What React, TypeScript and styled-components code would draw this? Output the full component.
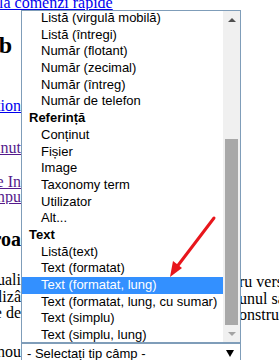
import styled, { createGlobalStyle } from 'styled-components';

const GlobalStyle = createGlobalStyle`
  html, body {
    margin: 0;
    padding: 0;
    background: #fff;
  }
  body {
    font-family: "Liberation Serif", "Times New Roman", serif;
    font-size: 16px;
    color: #000;
  }
`;

const Page = styled.div`
  position: relative;
  width: 279px;
  height: 360px;
  overflow: hidden;
  display: flex;
  flex-direction: column;
`;

const Line = styled.div<{ $top: number; $lh?: number; $size?: number; $bold?: boolean }>`
  display: flex;
  flex: none;
  margin-top: ${(p) => p.$top}px;
  line-height: ${(p) => p.$lh ?? 18}px;
  font-size: ${(p) => p.$size ?? 16}px;
  font-weight: ${(p) => (p.$bold ? 700 : 400)};
  white-space: nowrap;
`;

const Block = styled.div<{ $top: number; $lh: number }>`
  display: flex;
  flex-direction: column;
  flex: none;
  margin-top: ${(p) => p.$top}px;
  line-height: ${(p) => p.$lh}px;
  white-space: nowrap;
`;

const Row = styled.div`
  display: flex;
`;

const LeftClip = styled.div<{ $w?: number }>`
  flex: 0 0 ${(p) => p.$w ?? 21}px;
  overflow: hidden;
  display: flex;
  justify-content: flex-end;
`;

const Spacer = styled.div<{ $w: number }>`
  flex: 0 0 ${(p) => p.$w}px;
`;

/* the right-hand column sits a little lower than the left one */
const RightText = styled.div`
  flex: 1;
  overflow: hidden;
  margin: 2px 0 -2px;
`;

const Link = styled.a<{ $visited?: boolean }>`
  color: ${(p) => (p.$visited ? '#551a8b' : '#0000ee')};
  text-decoration: underline;
`;

const TopLink = styled(Link)`
  margin-left: -1px;
`;

/* the opened select list */
const Popup = styled.div`
  position: absolute;
  left: 21px;
  top: 10px;
  width: 220px;
  height: 333px;
  box-sizing: border-box;
  border: 1px solid #7f9db9;
  background: #fff;
  display: flex;
  overflow: hidden;
  font-family: "Liberation Sans", Arial, sans-serif;
  font-size: 13px;
  color: #000;
`;

const Options = styled.div`
  flex: 1;
  display: flex;
  flex-direction: column;
  margin-top: -1px;
`;

const Option = styled.div<{ $group?: boolean; $active?: boolean }>`
  flex: none;
  height: 16.7px;
  line-height: 16.7px;
  padding-left: ${(p) => (p.$group ? 7 : 19)}px;
  font-weight: ${(p) => (p.$group ? 700 : 400)};
  background: ${(p) => (p.$active ? '#3390ff' : 'transparent')};
  color: ${(p) => (p.$active ? '#fff' : '#000')};
  white-space: nowrap;
`;

const Scrollbar = styled.div`
  flex: 0 0 17px;
  display: flex;
  flex-direction: column;
  background: #f0f0f0;
`;

const ScrollBtn = styled.div`
  flex: 0 0 17px;
  display: flex;
  align-items: center;
  justify-content: center;
`;

const Tri = styled.div<{ $up?: boolean; $color: string }>`
  width: 0;
  height: 0;
  border-left: 4px solid transparent;
  border-right: 4px solid transparent;
  ${(p) => (p.$up ? 'border-bottom' : 'border-top')}: 4px solid ${(p) => p.$color};
`;

const Track = styled.div`
  flex: 1;
  display: flex;
  flex-direction: column;
  justify-content: flex-end;
  padding: 0 2px;
`;

const Thumb = styled.div`
  height: 186px;
  background: #a8a8a8;
`;

const SelectRow = styled.div`
  display: flex;
  flex: none;
  margin-top: 21.5px;
  line-height: 18px;
  white-space: nowrap;
`;

const SelectBox = styled.div`
  flex: 0 0 220px;
  box-sizing: border-box;
  height: 21px;
  border: 1px solid #7f9db9;
  display: flex;
  align-items: center;
  justify-content: space-between;
  padding: 0 6px 0 5px;
  font-family: "Liberation Sans", Arial, sans-serif;
  font-size: 13px;
`;

const ArrowDown = styled.div`
  width: 0;
  height: 0;
  border-left: 4px solid transparent;
  border-right: 4px solid transparent;
  border-top: 7px solid #000;
`;

const Annotation = styled.svg`
  position: absolute;
  left: 0;
  top: 0;
  pointer-events: none;
`;

type Opt = { label: string; group?: boolean; active?: boolean };

const options: Opt[] = [
  { label: 'Listă (virgulă mobilă)' },
  { label: 'Listă (întregi)' },
  { label: 'Număr (flotant)' },
  { label: 'Număr (zecimal)' },
  { label: 'Număr (întreg)' },
  { label: 'Număr de telefon' },
  { label: 'Referință', group: true },
  { label: 'Conținut' },
  { label: 'Fișier' },
  { label: 'Image' },
  { label: 'Taxonomy term' },
  { label: 'Utilizator' },
  { label: 'Alt...' },
  { label: 'Text', group: true },
  { label: 'Listă(text)' },
  { label: 'Text (formatat)' },
  { label: 'Text (formatat, lung)', active: true },
  { label: 'Text (formatat, lung, cu sumar)' },
  { label: 'Text (simplu)' },
  { label: 'Text (simplu, lung)' },
];

const paragraph = [
  { left: 'actuali', right: 'ru versiunea' },
  { left: 'utilizâ', right: 'unul sau' },
  { left: 'ale de', right: 'onstrui' },
];

export default function App() {
  return (
    <>
      <GlobalStyle />
      <Page>
        <Line $top={-6}>
          <TopLink>la comenzi rapide</TopLink>
        </Line>
        <Line $top={19} $size={24} $lh={28} $bold>
          <LeftClip $w={12}>Web</LeftClip>
        </Line>
        <Line $top={38}>
          <LeftClip>
            <Link>Configuration</Link>
          </LeftClip>
        </Line>
        <Line $top={24}>
          <LeftClip>
            <Link $visited>Conținut</Link>
          </LeftClip>
        </Line>
        <Block $top={17} $lh={15}>
          <Row>
            <LeftClip>
              <Link $visited>Interfețe In</Link>
            </LeftClip>
          </Row>
          <Row>
            <LeftClip>
              <Link $visited>câmpu</Link>
            </LeftClip>
          </Row>
        </Block>
        <Line $top={23} $size={20} $lh={24} $bold>
          <LeftClip>Eroa</LeftClip>
        </Line>
        <Block $top={21} $lh={16.5}>
          {paragraph.map((l, i) => (
            <Row key={i}>
              <LeftClip>{l.left}</LeftClip>
              <Spacer $w={218} />
              <RightText>{l.right}</RightText>
            </Row>
          ))}
        </Block>
        <SelectRow>
          <LeftClip>nou</LeftClip>
          <SelectBox>
            <span>- Selectați tip câmp -</span>
            <ArrowDown />
          </SelectBox>
        </SelectRow>

        <Popup>
          <Options>
            {options.map((o) => (
              <Option key={o.label} $group={o.group} $active={o.active}>
                {o.label}
              </Option>
            ))}
          </Options>
          <Scrollbar>
            <ScrollBtn>
              <Tri $up $color="#505050" />
            </ScrollBtn>
            <Track>
              <Thumb />
            </Track>
            <ScrollBtn>
              <Tri $color="#a3a3a3" />
            </ScrollBtn>
          </Scrollbar>
        </Popup>

        <Annotation width="279" height="360" viewBox="0 0 279 360">
          <line x1="214" y1="218" x2="176" y2="268" stroke="#e8161c" strokeWidth="3" strokeLinecap="round" />
          <polygon points="170,277 182,268 173,261" fill="#e8161c" />
        </Annotation>
      </Page>
    </>
  );
}
